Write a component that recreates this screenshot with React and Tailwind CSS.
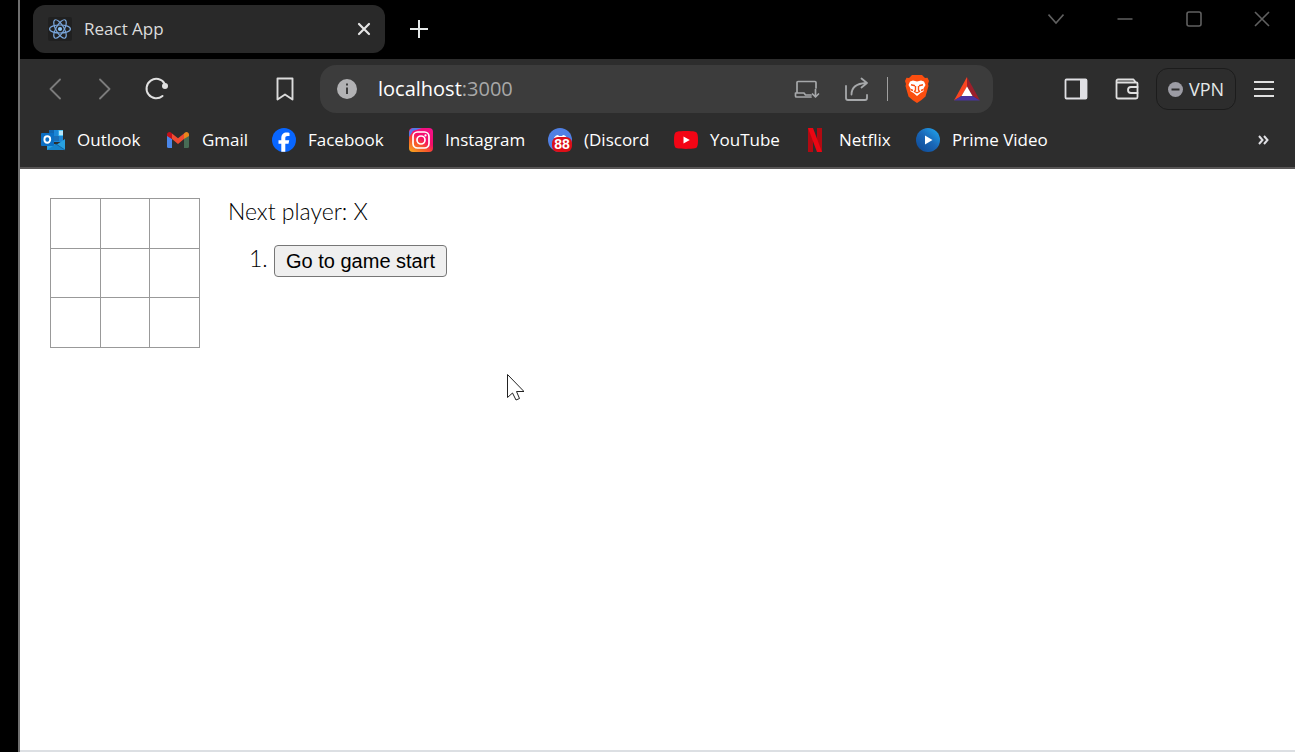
import React, { useState } from "react";

const stroke = { fill: "none", strokeLinecap: "round", strokeLinejoin: "round" };

function ReactLogo() {
  return (
    <svg viewBox="0 0 24 24" className="size-6 shrink-0 rounded-xs bg-[#202020]" aria-hidden="true">
      <g fill="none" stroke="#7aa7dc" strokeWidth="1.2">
        <ellipse cx="12" cy="12" rx="10.4" ry="4" />
        <ellipse cx="12" cy="12" rx="10.4" ry="4" transform="rotate(60 12 12)" />
        <ellipse cx="12" cy="12" rx="10.4" ry="4" transform="rotate(120 12 12)" />
      </g>
      <circle cx="12" cy="12" r="2.1" fill="#8cc4f5" />
    </svg>
  );
}

function OutlookIcon() {
  return (
    <svg viewBox="0 0 24 24" className="size-6" aria-hidden="true">
      <path d="M8 2h14v12H8z" fill="#1b86d6" />
      <path d="M8 2h5v5H8z" fill="#1066b0" />
      <path d="M17.500 2H22v6h-4.500z" fill="#50c8f5" />
      <path d="M18 3h4v4h-4z" fill="#b5e4fa" />
      <path d="M13 8h5v5h-5z" fill="#1a6fb8" />
      <path d="M6 12l9 5 9-6v11H6z" fill="#28a0e0" />
      <path d="M6 22l9-6 9 6z" fill="#1683cb" />
      <path d="M15 16l9 6" stroke="#125a94" strokeWidth="0.8" />
      <rect x="0" y="5" width="13" height="13" rx="1" fill="#0b6fc4" />
      <ellipse cx="6.300" cy="11.500" rx="2.900" ry="3.200" fill="none" stroke="#fff" strokeWidth="1.900" />
    </svg>
  );
}

function GmailIcon() {
  return (
    <svg viewBox="0 0 24 24" className="size-6" aria-hidden="true">
      <path d="M1 7l5 4v9H2.500A1.500 1.500 0 0 1 1 18.500z" fill="#4a86e8" />
      <path d="M23 7l-5 4v9h3.500a1.500 1.500 0 0 0 1.500-1.500z" fill="#476b55" />
      <path d="M6 5.500l6 4.700 6-4.700V11l-6 5-6-5z" fill="#f04a32" />
      <path d="M1 8V6.500C1 4 3.700 3.200 5 4.500l1 1V11z" fill="#c5101a" />
      <path d="M23 8V6.500c0-2.500-2.700-3.300-4-2l-1 1V11z" fill="#e8861c" />
    </svg>
  );
}

function FacebookIcon() {
  return (
    <svg viewBox="0 0 24 24" className="size-6" aria-hidden="true">
      <circle cx="12" cy="12" r="12" fill="#0866ff" />
      <path d="M9.300 23.700v-7.900H6.500v-3.500h2.800v-1.700c0-4.200 2-6 5.600-6 .9 0 1.900.1 2.600.3v3.200h-1.700c-1.900 0-2.500.8-2.500 2.400v1.800h3.900l-.7 3.500h-3.200v8z" fill="#fff" />
    </svg>
  );
}

function InstagramIcon() {
  return (
    <svg viewBox="0 0 24 24" className="size-6" aria-hidden="true">
      <defs>
        <linearGradient id="insta" x1="0.100" y1="1" x2="0.800" y2="0">
          <stop offset="0" stopColor="#f7a51f" />
          <stop offset="0.350" stopColor="#f7542b" />
          <stop offset="0.600" stopColor="#f50c68" />
          <stop offset="1" stopColor="#f51088" />
        </linearGradient>
      </defs>
      <rect width="24" height="24" rx="4" fill="url(#insta)" />
      <path d="M0 5a5 5 0 0 1 5-5h8L4 3 0 9z" fill="#5478e8" />
      <g fill="none" stroke="#fff" strokeWidth="1.700">
        <rect x="4" y="4" width="16" height="16" rx="4.500" />
        <circle cx="12" cy="12" r="4" />
      </g>
      <circle cx="16.500" cy="7.400" r="1.100" fill="#fff" />
    </svg>
  );
}

function DiscordIcon() {
  return (
    <span className="relative block size-6">
      <svg viewBox="0 0 24 24" className="size-6" aria-hidden="true">
        <circle cx="12" cy="12" r="12" fill="#5080e4" />
        <path d="M6 10c1-2 2.500-3 4-3l1 1h3l1-1c1.500 0 3 1 4 3z" fill="#fff" />
        <rect x="4" y="9" width="20" height="15" rx="6" fill="#dc0f18" />
      </svg>
      <span className="absolute right-0 bottom-0 flex h-4 w-5 items-center justify-center font-['Liberation_Sans'] text-[14px] leading-4 font-bold text-white">
        88
      </span>
    </span>
  );
}

function YouTubeIcon() {
  return (
    <svg viewBox="0 0 24 24" className="size-6" aria-hidden="true">
      <path d="M3 3.700c4-.8 14-.8 18 0 2 .4 3 2 3 8.300s-1 7.900-3 8.300c-4 .8-14 .8-18 0C1 19.900 0 18.300 0 12s1-7.900 3-8.300z" fill="#f20515" />
      <path d="M9.500 8.500l6.300 3.500-6.300 3.500z" fill="#fff" />
    </svg>
  );
}

function NetflixIcon() {
  return (
    <svg viewBox="0 0 24 24" className="size-6" aria-hidden="true">
      <path d="M5 0h5v24H5zM14 0h5v24h-5z" fill="#b10a12" />
      <path d="M5 0h5l9 24h-5z" fill="#ec0613" />
    </svg>
  );
}

function PrimeIcon() {
  return (
    <svg viewBox="0 0 24 24" className="size-6" aria-hidden="true">
      <defs>
        <linearGradient id="prime" x1="0.200" y1="0.900" x2="0.900" y2="0.100">
          <stop offset="0" stopColor="#104f9c" />
          <stop offset="0.500" stopColor="#1a68b8" />
          <stop offset="1" stopColor="#209fe8" />
        </linearGradient>
      </defs>
      <circle cx="12" cy="12" r="12" fill="url(#prime)" />
      <path d="M9 7.500l7.500 4.500L9 16.500z" fill="#fff" />
    </svg>
  );
}

function BraveIcon() {
  return (
    <svg viewBox="0 0 24 28" className="h-7 w-6" aria-hidden="true">
      <path d="M7 0h10l3 3 2.500-.3L24 6l-1 3 .5 2-3 10.500-4 3.500L12 28l-4.500-3-4-3.500L.5 11 1 9 0 6l1.500-3.300L4 3z" fill="#fb4e10" />
      <path d="M5 6.500l3-1 4 1 4-1 3 1 1.500 3.500-2 3.500.3 2.500-3.300 2L12 21l-3.500-3-3.300-2 .3-2.500-2-3.500z" fill="#fff" />
      <path d="M6 9.800l4 1M18 9.800l-4 1M10.500 11v4L9.500 16.500l2.500 1.300 2.500-1.300-1-1.500V11M5.500 14.500l2.500 1M18.500 14.500l-2.500 1" stroke="#fb4e10" strokeWidth="1.400" fill="none" />
    </svg>
  );
}

function RewardsIcon() {
  return (
    <svg viewBox="0 0 28 24" className="h-6 w-7" aria-hidden="true">
      <path d="M14 0v10L8.500 19 1 23.500z" fill="#fa4520" />
      <path d="M14 0l13 23.500-7.500-4.500L14 10z" fill="#9c1f2a" />
      <path d="M1 23.500L8.500 19h11l7.500 4.500z" fill="#4a34a0" />
      <path d="M14 9.500l5.500 9.500h-11z" fill="#fff" />
    </svg>
  );
}

const bookmarks = [
  { label: "Outlook", href: "#outlook", Icon: OutlookIcon, width: "w-[101px]" },
  { label: "Gmail", href: "#gmail", Icon: GmailIcon, width: "w-[82px]" },
  { label: "Facebook", href: "#facebook", Icon: FacebookIcon, width: "w-[113px]" },
  { label: "Instagram", href: "#instagram", Icon: InstagramIcon, width: "w-[115px]" },
  { label: "(Discord", href: "#discord", Icon: DiscordIcon, width: "w-[102px]" },
  { label: "YouTube", href: "#youtube", Icon: YouTubeIcon, width: "w-[105px]" },
  { label: "Netflix", href: "#netflix", Icon: NetflixIcon, width: "w-[89px]" },
  { label: "Prime Video", href: "#prime-video", Icon: PrimeIcon, width: "w-[133px]" },
];

function IconButton({ label, className = "", children }) {
  return (
    <button type="button" aria-label={label} className={`flex shrink-0 items-center justify-center ${className}`}>
      {children}
    </button>
  );
}

function TitleBar() {
  return (
    <div className="flex h-[59px] items-start bg-black pl-[13px]">
      <div className="mt-[5px] flex h-12 w-[352px] items-center rounded-xl bg-[#292929] pr-2 pl-[15px]">
        <ReactLogo />
        <span className="ml-3 flex-1 text-[17px] text-[#dcdcdc]">React App</span>
        <IconButton label="Close tab" className="size-[26px]">
          <svg viewBox="0 0 14 14" className="size-3.5" stroke="#e4e4e4" strokeWidth="2.200" {...stroke}>
            <path d="M2 2l10 10M12 2L2 12" />
          </svg>
        </IconButton>
      </div>
      <IconButton label="New tab" className="mt-[5px] ml-[10px] size-12">
        <svg viewBox="0 0 20 20" className="size-5" stroke="#e4e8e8" strokeWidth="2" fill="none">
          <path d="M10 1v18M1 10h18" />
        </svg>
      </IconButton>
      <div className="ml-auto flex">
        <IconButton label="Search tabs" className="h-[38px] w-[69px]">
          <svg viewBox="0 0 16 16" className="size-4" stroke="#606060" strokeWidth="1.600" fill="none">
            <path d="M.5 3.500L8 12l7.500-8.500" />
          </svg>
        </IconButton>
        <IconButton label="Minimize" className="h-[38px] w-[69px]">
          <svg viewBox="0 0 16 16" className="size-4" stroke="#606060" strokeWidth="1.500" fill="none">
            <path d="M.5 8h15" />
          </svg>
        </IconButton>
        <IconButton label="Maximize" className="h-[38px] w-[69px]">
          <svg viewBox="0 0 16 16" className="size-4" stroke="#606060" strokeWidth="1.600" fill="none">
            <rect x="1" y="1" width="14" height="14" rx="2" />
          </svg>
        </IconButton>
        <IconButton label="Close window" className="h-[38px] w-[67px]">
          <svg viewBox="0 0 16 16" className="size-4" stroke="#606060" strokeWidth="1.600" fill="none">
            <path d="M1 1l14 14M15 1L1 15" />
          </svg>
        </IconButton>
      </div>
    </div>
  );
}

function AddressBar() {
  const [url, setUrl] = useState("localhost:3000");
  const [editing, setEditing] = useState(false);
  return (
    <div className="ml-2.5 flex h-12 min-w-0 flex-1 items-center rounded-2xl bg-[#3c3c3c] pl-[17px]">
      <svg viewBox="0 0 20 20" className="size-5 shrink-0" aria-hidden="true">
        <circle cx="10" cy="10" r="10" fill="#b2b2b4" />
        <path d="M9 4.500h2v2H9zM9 8.500h2v6.500H9z" fill="#3c3c3c" />
      </svg>
      {editing ? (
        <input
          aria-label="Address"
          autoFocus
          value={url}
          onChange={(e) => setUrl(e.target.value)}
          onBlur={() => setEditing(false)}
          className="ml-[21px] min-w-0 flex-1 bg-transparent text-xl text-white outline-none"
        />
      ) : (
        <button
          type="button"
          aria-label="Address"
          onClick={() => setEditing(true)}
          className="ml-[21px] min-w-0 flex-1 cursor-text truncate text-left text-[20px] text-white"
        >
          {url.split(":")[0]}
          <span className="text-[#a8a8a8]">{url.slice(url.split(":")[0].length)}</span>
        </button>
      )}
      <IconButton label="Install app" className="size-[50px]">
        <svg viewBox="0 0 26 20" className="h-5 w-[26px]" stroke="#a6a8aa" strokeWidth="1.700" {...stroke}>
          <path d="M3 14V3.500a1 1 0 0 1 1-1h17a1 1 0 0 1 1 1V9M1.500 14H10l1.500 2H17M1.500 14v3a1 1 0 0 0 1 1H17" />
          <path d="M21.500 10.500v7M18.500 15l3 3 3-3" />
        </svg>
      </IconButton>
      <IconButton label="Share" className="size-[50px]">
        <svg viewBox="0 0 26 26" className="size-[26px]" stroke="#a6a8aa" strokeWidth="1.800" {...stroke}>
          <path d="M2 10v12a2 2 0 0 0 2 2h17a2 2 0 0 0 2-2v-3" />
          <path d="M7.500 18.500C7.500 11 13 7.500 22 7M17.500 2.500L23 7l-5.500 4.500" />
        </svg>
      </IconButton>
      <span className="ml-[5px] h-6 w-px bg-[#a0a0a0]" />
      <IconButton label="Brave Shields" className="ml-[5px] size-[48px]">
        <BraveIcon />
      </IconButton>
      <IconButton label="Brave Rewards" className="h-[50px] w-[52px]">
        <RewardsIcon />
      </IconButton>
    </div>
  );
}

function Toolbar() {
  return (
    <div className="flex h-[60px] items-center pr-1.5 pl-2.5">
      <IconButton label="Back" className="size-[50px]">
        <svg viewBox="0 0 12 22" className="h-[22px] w-3" stroke="#7c7c7c" strokeWidth="1.800" {...stroke}>
          <path d="M11 1.500L1.500 11 11 20.500" />
        </svg>
      </IconButton>
      <IconButton label="Forward" className="size-[50px]">
        <svg viewBox="0 0 12 22" className="h-[22px] w-3" stroke="#7c7c7c" strokeWidth="1.800" {...stroke}>
          <path d="M1 1.500L10.500 11 1 20.500" />
        </svg>
      </IconButton>
      <IconButton label="Reload" className="size-[52px]">
        <svg viewBox="0 0 24 24" className="size-6" stroke="#e0e0e0" strokeWidth="2" {...stroke}>
          <path d="M20.500 6.500A9.700 9.700 0 1 0 18.500 19" />
          <circle cx="21" cy="9" r="3" fill="#e0e0e0" stroke="none" />
        </svg>
      </IconButton>
      <IconButton label="Bookmark this page" className="ml-[78px] size-[50px]">
        <svg viewBox="0 0 18 24" className="h-6 w-[18px]" stroke="#dcdcdc" strokeWidth="1.900" fill="none" strokeLinejoin="round">
          <path d="M1.500 1.500h15v21L9 17.500l-7.500 5z" />
        </svg>
      </IconButton>
      <AddressBar />
      <IconButton label="Sidebar" className="ml-[57px] size-[52px]">
        <svg viewBox="0 0 24 22" className="h-[22px] w-6" aria-hidden="true">
          <rect x="1.500" y="1.500" width="21" height="19" rx="1" fill="none" stroke="#e0e0e4" strokeWidth="1.800" />
          <path d="M16 1h7v20h-7z" fill="#e0e0e4" />
        </svg>
      </IconButton>
      <IconButton label="Wallet" className="size-[50px]">
        <svg viewBox="0 0 24 22" className="h-[22px] w-6" stroke="#e0e0e0" strokeWidth="1.800" {...stroke}>
          <path d="M1.500 4.500h20a1 1 0 0 1 1 1v13.500a1.500 1.500 0 0 1-1.500 1.500H3a1.500 1.500 0 0 1-1.500-1.500V3A1.500 1.500 0 0 1 3 1.500h15.500L20.500 4" />
          <path d="M22.500 9h-6.500a3 3 0 0 0 0 6h6.500" />
        </svg>
      </IconButton>
      <button
        type="button"
        className="ml-1 flex h-[42px] w-20 shrink-0 items-center justify-center gap-1.5 rounded-xl border border-[#1c1c1c] text-[18px] text-[#e4e8e8]"
      >
        <svg viewBox="0 0 15 15" className="size-[15px] shrink-0" aria-hidden="true">
          <circle cx="7.500" cy="7.500" r="7.500" fill="#9c9ca4" />
          <path d="M3.500 6.500h8v2h-8z" fill="#2d2d2d" />
        </svg>
        VPN
      </button>
      <IconButton label="Menu" className="ml-0.5 h-[50px] w-[51px]">
        <svg viewBox="0 0 20 16" className="h-4 w-5" stroke="#e0e0e0" strokeWidth="1.800" fill="none">
          <path d="M0 1h20M0 8h20M0 15h20" />
        </svg>
      </IconButton>
    </div>
  );
}

function BookmarksBar() {
  return (
    <nav aria-label="Bookmarks" className="flex h-12 items-center pr-[26px] pb-1.5 pl-[21px] text-[17px] text-white">
      <ul className="flex gap-6">
        {bookmarks.map(({ label, href, Icon, width }) => (
          <li key={label} className={width}>
            <a href={href} className="flex items-center gap-3 whitespace-nowrap">
              <span className="shrink-0"><Icon /></span>
              {label}
            </a>
          </li>
        ))}
      </ul>
      <IconButton label="More bookmarks" className="ml-auto">
        <svg viewBox="0 0 11 10" className="h-2.5 w-[11px]" stroke="#e0e0e4" strokeWidth="2" fill="none">
          <path d="M1 1l3.500 4L1 9M6 1l3.500 4L6 9" />
        </svg>
      </IconButton>
    </nav>
  );
}

const lines = [
  [0, 1, 2], [3, 4, 5], [6, 7, 8],
  [0, 3, 6], [1, 4, 7], [2, 5, 8],
  [0, 4, 8], [2, 4, 6],
];

function winnerOf(squares) {
  const line = lines.find(([a, b, c]) => squares[a] && squares[a] === squares[b] && squares[a] === squares[c]);
  return line ? squares[line[0]] : null;
}

function Game() {
  const [history, setHistory] = useState([Array(9).fill(null)]);
  const [step, setStep] = useState(0);
  const squares = history[step];
  const player = step % 2 === 0 ? "X" : "O";
  const winner = winnerOf(squares);

  function play(i) {
    if (winner || squares[i]) return;
    const next = squares.slice();
    next[i] = player;
    setHistory([...history.slice(0, step + 1), next]);
    setStep(step + 1);
  }

  return (
    <main className="flex flex-1 items-start bg-white pt-[29px] pl-[30px] text-black">
      <div className="grid size-[150px] grid-cols-3 grid-rows-3 border-t border-l border-[#999]">
        {squares.map((value, i) => (
          <button
            key={i}
            type="button"
            aria-label={`Square ${i + 1}`}
            onClick={() => play(i)}
            className="border-r border-b border-[#999] bg-white text-3xl font-bold"
          >
            {value}
          </button>
        ))}
      </div>
      <div className="ml-7 font-['Lato','Century_Gothic',sans-serif] text-[23px] leading-[27px] font-light">
        <div>{winner ? `Winner: ${winner}` : `Next player: ${player}`}</div>
        <ol className="mt-5 list-decimal pl-[46px]">
          {history.map((_, move) => (
            <li key={move}>
              <button
                type="button"
                onClick={() => setStep(move)}
                className="h-8 rounded border border-[#767676] bg-[#efefef] px-[11px] align-middle font-['Liberation_Sans',Arial,sans-serif] text-[20px] leading-6 font-normal"
              >
                {move ? `Go to move #${move}` : "Go to game start"}
              </button>
            </li>
          ))}
        </ol>
      </div>
    </main>
  );
}

export default function App() {
  return (
    <div className="relative flex min-h-screen flex-col bg-black pl-[18px] font-['Open_Sans','Segoe_UI',sans-serif]">
      <div className="flex flex-1 flex-col border-l-2 border-[#6f6f6f]">
        <TitleBar />
        <header className="border-b-2 border-[#585656] bg-[#2d2d2d]">
          <Toolbar />
          <BookmarksBar />
        </header>
        <Game />
        <div className="h-0.5 bg-[#dcdfe3]" />
      </div>
      <svg
        viewBox="0 0 18 28"
        className="pointer-events-none absolute top-[373px] left-[506px] h-7 w-[18px]"
        aria-hidden="true"
      >
        <path d="M1.500 1.500v23l5-4.500 3.500 7 3.500-1.500-3-7h7.500z" fill="#fff" stroke="#222" strokeWidth="1" />
      </svg>
    </div>
  );
}
